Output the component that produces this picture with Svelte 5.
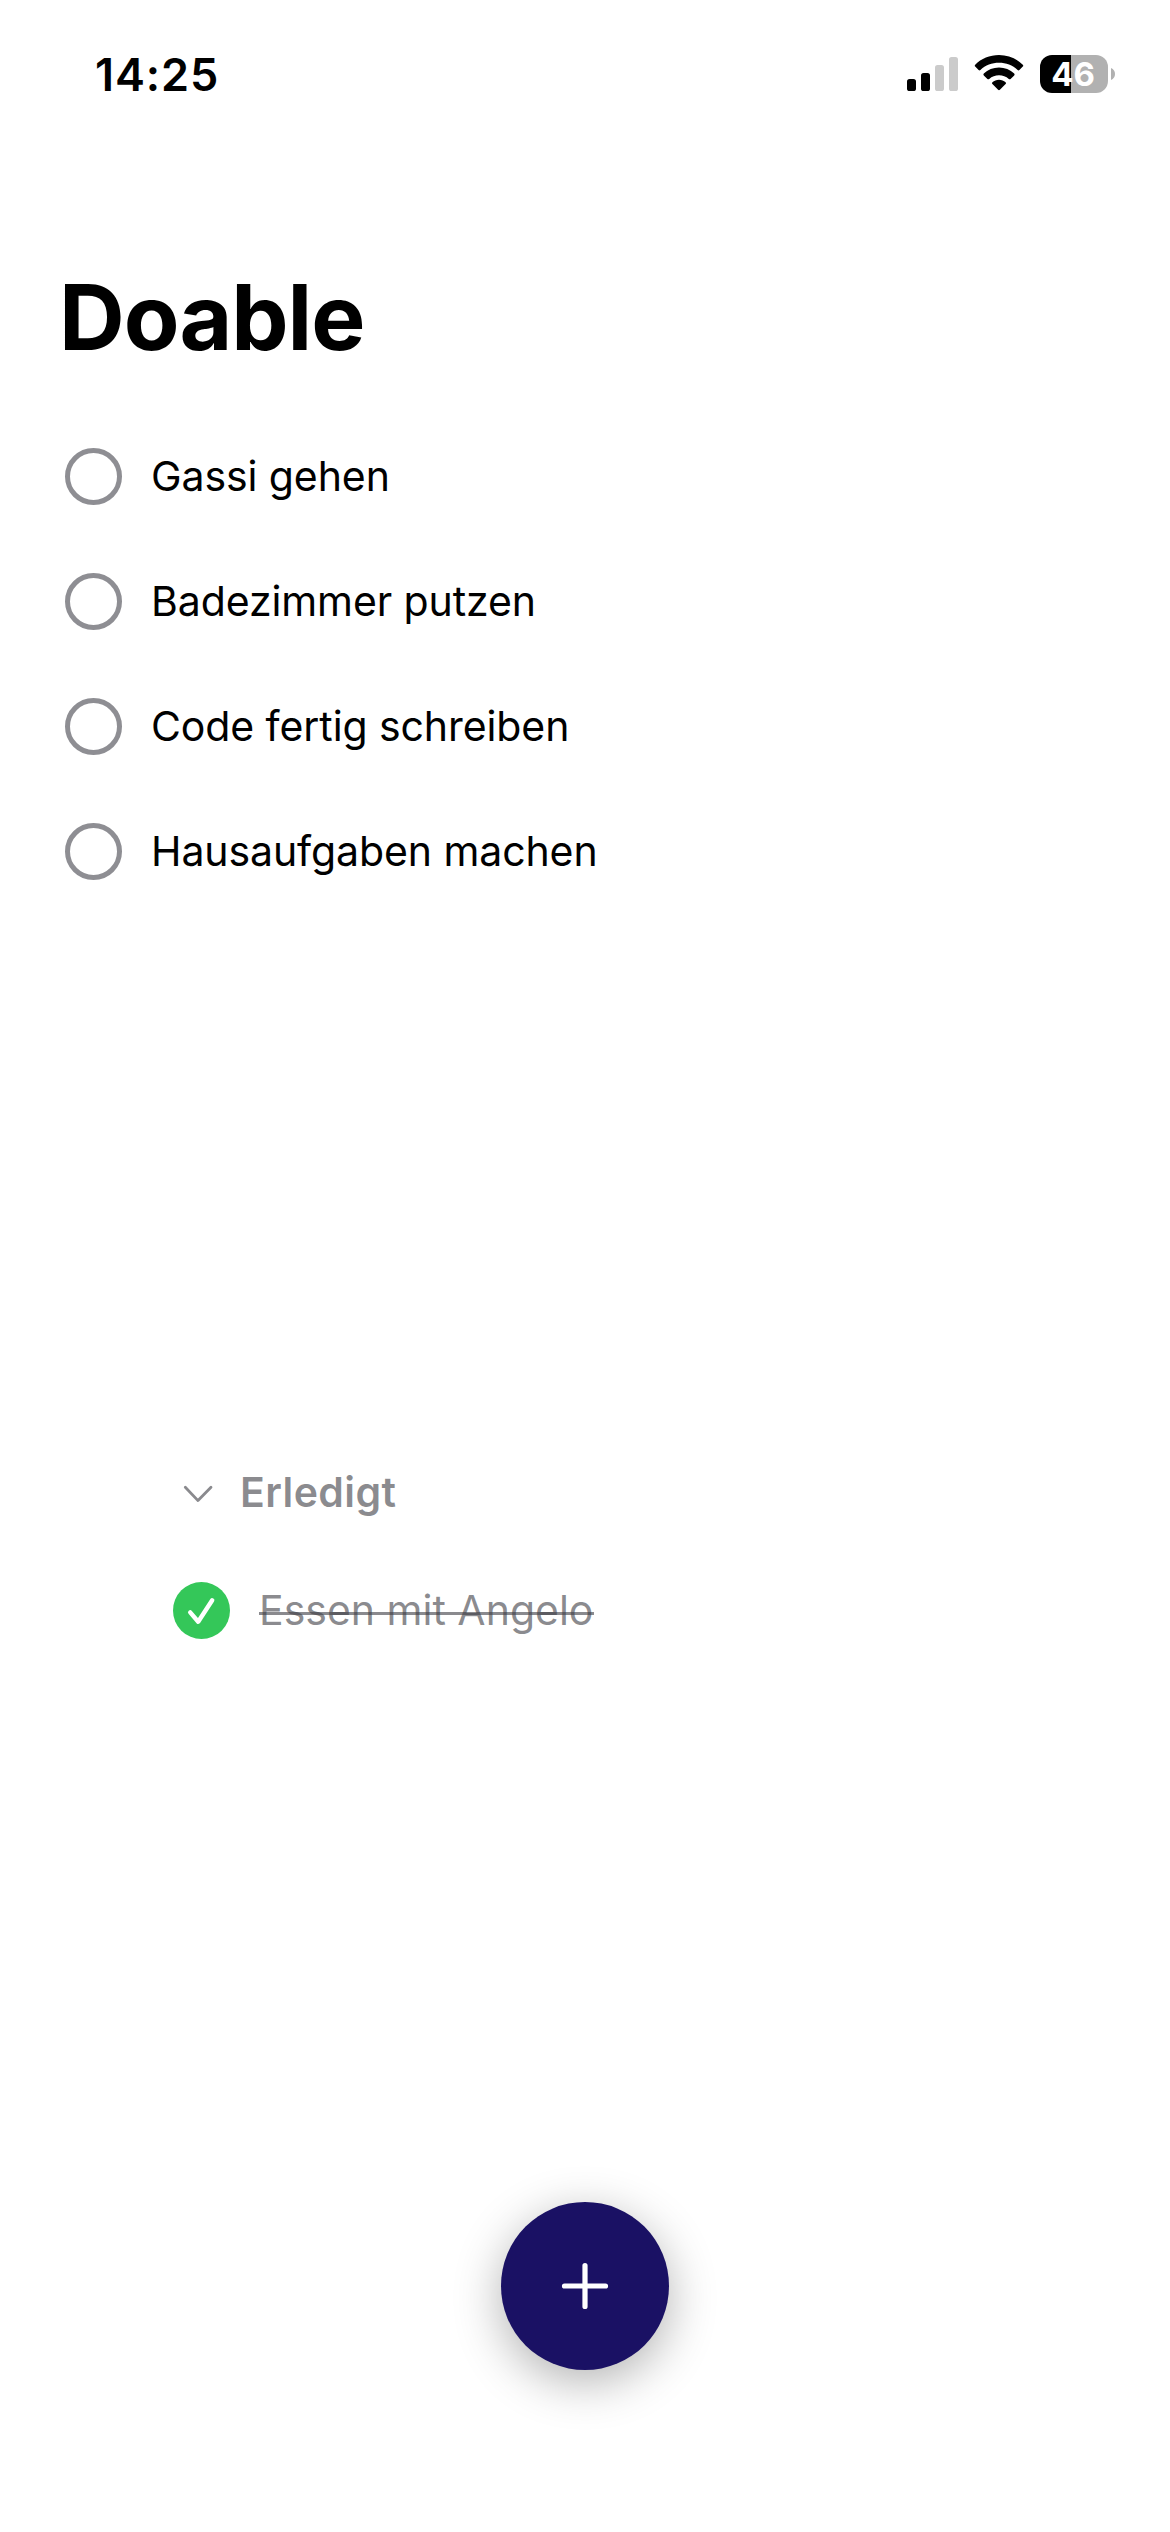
<script>
  const openTasks = ['Gassi gehen', 'Badezimmer putzen', 'Code fertig schreiben', 'Hausaufgaben machen'];
  const doneTasks = ['Essen mit Angelo'];
</script>

<div class="screen">
  <header class="status">
    <span class="time">14:25</span>
    <div class="indicators">
      <svg class="signal" viewBox="0 0 51 36" aria-hidden="true">
        <rect x="0" y="23" width="9" height="12" rx="2.6" />
        <rect x="14" y="17" width="9" height="18" rx="2.6" />
        <rect class="off" x="28" y="9" width="9" height="26" rx="2.6" />
        <rect class="off" x="42" y="1" width="9" height="34" rx="2.6" />
      </svg>
      <svg class="wifi" viewBox="0 0 50 36" aria-hidden="true">
        <path d="M25 0C34.2 0 42.8 3.6 48.8 9.7Q49.7 10.7 48.8 11.6L45.4 15Q44.5 15.8 43.6 15C38.6 10.3 32 7.8 25 7.8S11.4 10.3 6.4 15Q5.5 15.8 4.6 15L1.2 11.6Q.3 10.7 1.2 9.7C7.2 3.6 15.8 0 25 0Z" />
        <path d="M25 12.4C30.8 12.4 36.2 14.6 40.2 18.5Q41.1 19.4 40.2 20.4L36.6 23.9Q35.7 24.7 34.8 23.9C32.1 21.5 28.7 20.2 25 20.2S17.9 21.5 15.2 23.9Q14.3 24.7 13.4 23.9L9.8 20.4Q8.9 19.4 9.8 18.5C13.8 14.6 19.2 12.4 25 12.4Z" />
        <path d="M25 24.8C27.5 24.8 29.8 25.7 31.6 27.2Q32.6 28.1 31.6 29L25.9 34.8Q25 35.7 24.1 34.8L18.4 29Q17.4 28.1 18.4 27.2C20.2 25.7 22.5 24.8 25 24.8Z" />
      </svg>
      <div class="battery">
        <div class="cell">46</div>
        <svg class="nub" viewBox="0 0 4 12" aria-hidden="true"><path d="M0 0Q4 1.8 4 6T0 12Z" /></svg>
      </div>
    </div>
  </header>

  <h1>Doable</h1>

  <ul class="open">
    {#each openTasks as task}
      <li>
        <span class="ring"></span>
        <span class="label">{task}</span>
      </li>
    {/each}
  </ul>

  <section class="done">
    <div class="heading">
      <svg class="chevron" viewBox="0 0 30 18" aria-hidden="true"><path d="M2.3 2.3L15 15.6L28 2.3" /></svg>
      <h2>Erledigt</h2>
    </div>
    {#each doneTasks as task}
      <div class="finished">
        <svg class="tick" viewBox="0 0 57 57" aria-hidden="true">
          <circle cx="28.5" cy="28.5" r="28.5" />
          <path d="M17.2 30.4L25.2 39.7L39.2 18.3" />
        </svg>
        <span class="struck">{task}</span>
      </div>
    {/each}
  </section>

  <footer>
    <button class="add" aria-label="Hinzufügen">
      <svg viewBox="0 0 48 48" aria-hidden="true"><path d="M24 3.5V44.5M3.5 24H44.5" /></svg>
    </button>
  </footer>
</div>

<style>
  :global(body) {
    margin: 0;
    background: #fff;
  }

  .screen {
    box-sizing: border-box;
    display: flex;
    flex-direction: column;
    width: 1170px;
    height: 2532px;
    overflow: hidden;
    background: #fff;
    color: #000;
    font-family: Inter, 'Liberation Sans', sans-serif;
  }

  .status {
    display: flex;
    justify-content: space-between;
    height: 140px;
    padding: 0 55px 0 95px;
  }

  .time {
    padding-top: 45px;
    font-size: 45px;
    line-height: 60px;
    font-weight: 600;
    letter-spacing: 0.9px;
  }

  .indicators {
    display: flex;
    align-items: flex-start;
    padding-top: 55px;
  }

  .signal {
    width: 51px;
    height: 36px;
    margin: 1px 16px 0 0;
  }

  .off {
    fill: #cbcbcb;
  }

  .wifi {
    width: 50px;
    height: 36px;
    margin-right: 16px;
  }

  .battery {
    display: flex;
    align-items: center;
    gap: 3px;
  }

  .cell {
    box-sizing: border-box;
    width: 68px;
    height: 38px;
    padding-right: 2px;
    border-radius: 12px;
    background: linear-gradient(90deg, #000 31px, #b1b1b1 31px);
    color: #fff;
    font-size: 33px;
    font-weight: 700;
    line-height: 38px;
    text-align: center;
  }

  .nub {
    width: 4px;
    height: 12px;
    fill: #b1b1b1;
  }

  h1 {
    margin: 122px 0 0 59px;
    font-size: 91px;
    line-height: 110px;
    font-weight: 700;
    letter-spacing: -1px;
  }

  .open {
    display: flex;
    flex-direction: column;
    gap: 68px;
    margin: 76px 0 0;
    padding: 0 0 0 65px;
    list-style: none;
  }

  li,
  .finished {
    display: flex;
    align-items: center;
    gap: 29px;
    height: 57px;
    font-size: 41px;
    line-height: 57px;
    white-space: nowrap;
  }

  .label {
    letter-spacing: -0.09px;
  }

  .ring {
    box-sizing: border-box;
    width: 57px;
    height: 57px;
    border: 5px solid #8e8e93;
    border-radius: 50%;
  }

  .done {
    margin: 585px 0 0 173px;
    color: rgba(60, 60, 67, 0.6);
  }

  .heading {
    display: flex;
    align-items: center;
    gap: 27px;
    height: 57px;
    padding-left: 10px;
  }

  .chevron {
    width: 30px;
    height: 18px;
    fill: none;
    stroke: #8a8a8e;
    stroke-width: 2.8;
    stroke-linecap: round;
    stroke-linejoin: round;
  }

  h2 {
    margin: 0;
    padding-bottom: 2px;
    font-size: 41px;
    line-height: 57px;
    font-weight: 600;
    letter-spacing: 0.4px;
  }

  .finished {
    margin-top: 60px;
  }

  .tick {
    width: 57px;
    height: 57px;
    fill: #34c759;
  }

  .tick path {
    fill: none;
    stroke: #fff;
    stroke-width: 4.4;
    stroke-linecap: round;
    stroke-linejoin: round;
  }

  .struck {
    position: relative;
  }

  .struck::after {
    content: '';
    position: absolute;
    left: 0;
    right: -1px;
    top: 30px;
    height: 3px;
    background: rgba(60, 60, 67, 0.6);
  }

  footer {
    display: flex;
    justify-content: center;
    margin-top: auto;
    padding-bottom: 162px;
  }

  .add {
    display: flex;
    align-items: center;
    justify-content: center;
    width: 168px;
    height: 168px;
    padding: 0;
    border: 0;
    border-radius: 50%;
    background: #1a1164;
    box-shadow: 0 12px 48px rgba(0, 0, 0, 0.3);
  }

  .add svg {
    width: 48px;
    height: 48px;
    fill: none;
    stroke: #fff;
    stroke-width: 5.2;
    stroke-linecap: round;
  }
</style>
